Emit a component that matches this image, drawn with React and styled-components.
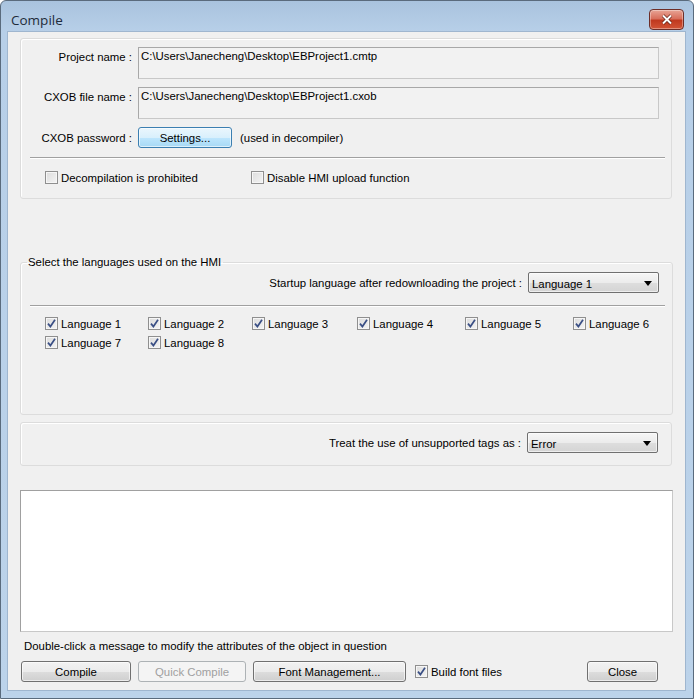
import React from 'react';
import styled, { createGlobalStyle } from 'styled-components';

const GlobalStyle = createGlobalStyle`
  html, body {
    margin: 0;
    padding: 0;
    background: #ffffff;
  }
  body {
    font-family: "Liberation Sans", Arial, sans-serif;
    font-size: 11.4px;
    color: #000;
  }
`;

const Window = styled.div`
  width: 694px;
  height: 699px;
  box-sizing: border-box;
  border: 1px solid #5a6b7d;
  border-radius: 6px 6px 0 0;
  background: linear-gradient(to bottom, #a9c3de 0px, #b7cfe8 30px, #bcd3ea 100%);
  display: flex;
  flex-direction: column;
  padding: 0 7px 7px 6px;
`;

const TitleBar = styled.div`
  height: 30px;
  display: flex;
  align-items: center;
  justify-content: space-between;
  padding-left: 4px;
`;

const Title = styled.span`
  font-family: "Open Sans", "Noto Sans", sans-serif;
  font-size: 13.5px;
  color: #1e2b3a;
  margin-top: 8px;
`;

const CloseButton = styled.div`
  width: 33px;
  height: 19px;
  margin-top: 6px;
  margin-right: 2px;
  border: 1px solid #6d2e28;
  border-radius: 4px;
  background: linear-gradient(to bottom, #e8a495 0%, #d86f5c 45%, #c0391f 55%, #d25436 100%);
  display: flex;
  align-items: center;
  justify-content: center;
  box-shadow: inset 0 0 0 1px rgba(255, 255, 255, 0.35);
`;

const Client = styled.div`
  flex: 1;
  background: #f0f0f0;
  border: 1px solid #9fb6cf;
  display: flex;
  flex-direction: column;
  padding: 6px 12px 0 12px;
`;

const Panel = styled.div`
  border: 1px solid #dcdcdc;
  border-radius: 3px;
  box-shadow: inset 1px 1px 0 #ffffff;
  box-sizing: border-box;
  height: ${p => p.$h}px;
  margin-top: ${p => p.$mt || 0}px;
  width: 652px;
`;

const FieldRow = styled.div`
  display: flex;
  align-items: ${p => (p.$center ? 'center' : 'flex-start')};
  margin-top: ${p => p.$mt}px;
`;

const Label = styled.div`
  width: 117px;
  text-align: right;
  padding-right: 6px;
  box-sizing: border-box;
  padding-top: ${p => p.$pt || 0}px;
  white-space: nowrap;
`;

const PathBox = styled.div`
  width: 521px;
  height: 32px;
  box-sizing: border-box;
  border: 1px solid #c8c8c8;
  border-top-color: #a8a8a8;
  border-left-color: #a8a8a8;
  background: #f2f2f2;
  padding: 2px 2px;
`;

const Button = styled.div`
  width: ${p => p.$w}px;
  height: 21px;
  margin-left: ${p => p.$ml || 0}px;
  box-sizing: border-box;
  border: 1px solid ${p => (p.$focus ? '#3c7fb1' : p.$disabled ? '#adb2b5' : '#707070')};
  border-radius: 3px;
  background: ${p =>
    p.$focus
      ? 'linear-gradient(to bottom, #eaf6fd 0%, #d9f0fc 50%, #bee6fd 51%, #a7d9f5 100%)'
      : p.$disabled
      ? '#f4f4f4'
      : 'linear-gradient(to bottom, #f2f2f2 0%, #ebebeb 50%, #dddddd 51%, #cfcfcf 100%)'};
  box-shadow: ${p => (p.$disabled ? 'none' : 'inset 0 0 0 1px rgba(255,255,255,0.6)')};
  color: ${p => (p.$disabled ? '#a0a0a0' : '#000')};
  display: flex;
  align-items: center;
  justify-content: center;
  flex-shrink: 0;
`;

const Note = styled.span`
  margin-left: 8px;
`;

const Separator = styled.div`
  height: 1px;
  background: #a0a0a0;
  border-bottom: 1px solid #ffffff;
  margin: ${p => p.$m};
`;

const CheckRow = styled.div`
  display: flex;
  align-items: center;
  margin: ${p => p.$m || 0};
`;

const Check = styled.label`
  display: flex;
  align-items: center;
  gap: 3px;
  width: ${p => (p.$w ? `${p.$w}px` : 'auto')};
  margin-left: ${p => p.$ml || 0}px;
  flex-shrink: 0;
  white-space: nowrap;
`;

const Box = styled.span`
  width: 13px;
  height: 13px;
  box-sizing: border-box;
  border: 1px solid #8f8f8f;
  background: linear-gradient(135deg, #dcdcdc 0%, #f4f4f4 100%);
  box-shadow: inset 0 0 0 1px #f6f6f6;
  display: flex;
  align-items: center;
  justify-content: center;
`;

const GroupBox = styled.fieldset`
  margin: ${p => p.$mt}px 0 0 0;
  padding: 0;
  width: 653px;
  box-sizing: border-box;
  height: ${p => p.$h}px;
  border: 1px solid #dcdcdc;
  border-radius: 3px;
  box-shadow: inset 1px 1px 0 #ffffff;
  min-width: 0;
`;

const Legend = styled.legend`
  padding: 0 2px 0 1px;
  margin-left: 6px;
`;

const ComboRow = styled.div`
  display: flex;
  align-items: center;
  justify-content: flex-end;
  padding-right: 13px;
  margin-top: ${p => p.$mt}px;
  gap: 6px;
`;

const Combo = styled.div`
  width: 131px;
  height: 21px;
  box-sizing: border-box;
  border: 1px solid #707070;
  border-radius: 2px;
  background: linear-gradient(to bottom, #f6f6f6 0%, #ececec 50%, #dedede 51%, #d4d4d4 100%);
  box-shadow: inset 0 0 0 1px rgba(255, 255, 255, 0.6);
  display: flex;
  align-items: center;
  justify-content: space-between;
  padding: 2px 6px 0 3px;
`;

const Arrow = styled.span`
  width: 0;
  height: 0;
  border-left: 4px solid transparent;
  border-right: 4px solid transparent;
  border-top: 5px solid #000;
`;

const LangGrid = styled.div`
  display: grid;
  grid-template-columns: 103px 104px 105px 108px 108px auto;
  row-gap: 6px;
  margin: 10px 0 0 24px;
`;

const MessageBox = styled.div`
  width: 653px;
  height: 142px;
  box-sizing: border-box;
  margin-top: 24px;
  background: #ffffff;
  border: 1px solid #a0a0a0;
  border-bottom-color: #c8c8c8;
  border-right-color: #c8c8c8;
`;

const Hint = styled.div`
  margin: 8px 0 0 4px;
  line-height: 13px;
`;

const Footer = styled.div`
  display: flex;
  align-items: center;
  margin: 8px 0 0 1px;
  padding-right: 15px;
`;

const Spacer = styled.div`
  flex: 1;
`;

const CheckMark = () => (
  <svg width="9" height="9" viewBox="0 0 9 9">
    <path d="M1 4.6 L3.4 7.6 L8 0.8" fill="none" stroke="#3a4f85" strokeWidth="1.7" />
  </svg>
);

const CheckBox = ({ checked, children, w, ml }) => (
  <Check $w={w} $ml={ml}>
    <Box>{checked && <CheckMark />}</Box>
    <span>{children}</span>
  </Check>
);

const languages = Array.from({ length: 8 }, (_, i) => `Language ${i + 1}`);

export default function App() {
  return (
    <>
      <GlobalStyle />
      <Window>
        <TitleBar>
          <Title>Compile</Title>
          <CloseButton>
            <svg width="12" height="11" viewBox="0 0 12 11">
              <path d="M2 1.5 L10 9.5 M10 1.5 L2 9.5" stroke="#5a1a10" strokeWidth="3.2" />
              <path d="M2 1.5 L10 9.5 M10 1.5 L2 9.5" stroke="#ffffff" strokeWidth="2" />
            </svg>
          </CloseButton>
        </TitleBar>
        <Client>
          <Panel $h={161}>
            <FieldRow $mt={8}>
              <Label $pt={4}>Project name :</Label>
              <PathBox>C:\Users\Janecheng\Desktop\EBProject1.cmtp</PathBox>
            </FieldRow>
            <FieldRow $mt={8}>
              <Label $pt={4}>CXOB file name :</Label>
              <PathBox>C:\Users\Janecheng\Desktop\EBProject1.cxob</PathBox>
            </FieldRow>
            <FieldRow $mt={8} $center>
              <Label>CXOB password :</Label>
              <Button $w={94} $focus>Settings...</Button>
              <Note>(used in decompiler)</Note>
            </FieldRow>
            <Separator $m="9px 6px 0 9px" />
            <CheckRow $m="12px 0 0 24px">
              <CheckBox w={206}>Decompilation is prohibited</CheckBox>
              <CheckBox>Disable HMI upload function</CheckBox>
            </CheckRow>
          </Panel>

          <GroupBox $mt={57} $h={159}>
            <Legend>Select the languages used on the HMI</Legend>
            <ComboRow $mt={4}>
              <span>Startup language after redownloading the project :</span>
              <Combo>
                <span>Language 1</span>
                <Arrow />
              </Combo>
            </ComboRow>
            <Separator $m="12px 7px 0 9px" />
            <LangGrid>
              {languages.map(l => (
                <CheckBox key={l} checked>
                  {l}
                </CheckBox>
              ))}
            </LangGrid>
          </GroupBox>

          <Panel $h={44} $mt={7}>
            <ComboRow $mt={9}>
              <span>Treat the use of unsupported tags as :</span>
              <Combo>
                <span>Error</span>
                <Arrow />
              </Combo>
            </ComboRow>
          </Panel>

          <MessageBox />

          <Hint>Double-click a message to modify the attributes of the object in question</Hint>

          <Footer>
            <Button $w={110}>Compile</Button>
            <Button $w={108} $ml={7} $disabled>
              Quick Compile
            </Button>
            <Button $w={153} $ml={7}>Font Management...</Button>
            <CheckBox checked ml={9}>Build font files</CheckBox>
            <Spacer />
            <Button $w={71}>Close</Button>
          </Footer>
        </Client>
      </Window>
    </>
  );
}
